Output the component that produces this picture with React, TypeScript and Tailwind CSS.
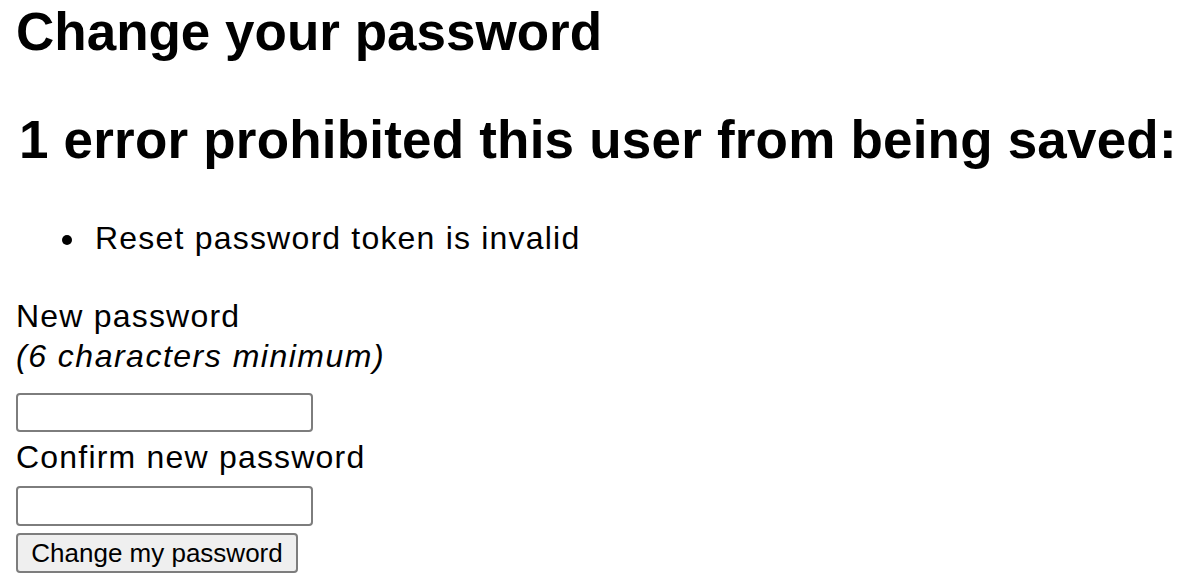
const App: React.FC = () => {
  return (
    <div className="px-4 font-['Liberation_Sans',Arial,sans-serif] text-black bg-white min-h-[581px]">
      <h2 className="pt-[2px] text-[53px] leading-[60px] font-bold">
        Change your password
      </h2>
      <form>
        <div>
          <h2 className="mt-[48px] pl-[3px] text-[53px] leading-[60px] font-bold tracking-[0.2px]">
            1 error prohibited this user from being saved:
          </h2>
          <ul className="mt-[48px] pl-[46px] list-none text-[32px] leading-[40px] tracking-[1.2px]">
            <li className="flex items-center">
              <span className="mt-[4px] mr-[23px] h-[10px] w-[10px] rounded-full bg-black" />
              Reset password token is invalid
            </li>
          </ul>
        </div>
        <div className="mt-[38px] flex flex-col items-start text-[32px] leading-[40px] tracking-[1.2px]">
          <label>New password</label>
          <em className="tracking-[1.5px]">(6 characters minimum)</em>
          <input
            type="password"
            className="mt-[17px] h-[39px] w-[297px] border-2 border-[#7d7d7d] rounded-[4px] bg-white"
          />
        </div>
        <div className="mt-[5px] flex flex-col items-start text-[32px] leading-[40px] tracking-[1.2px]">
          <label>Confirm new password</label>
          <input
            type="password"
            className="mt-[9px] h-[40px] w-[297px] border-2 border-[#7d7d7d] rounded-[4px] bg-white"
          />
        </div>
        <div className="mt-[7px]">
          <button
            type="button"
            className="h-[40px] w-[282px] border-2 border-[#7d7d7d] rounded-[4px] bg-[#efefef] text-[26px] leading-none text-black"
          >
            Change my password
          </button>
        </div>
      </form>
    </div>
  );
};

export default App;
